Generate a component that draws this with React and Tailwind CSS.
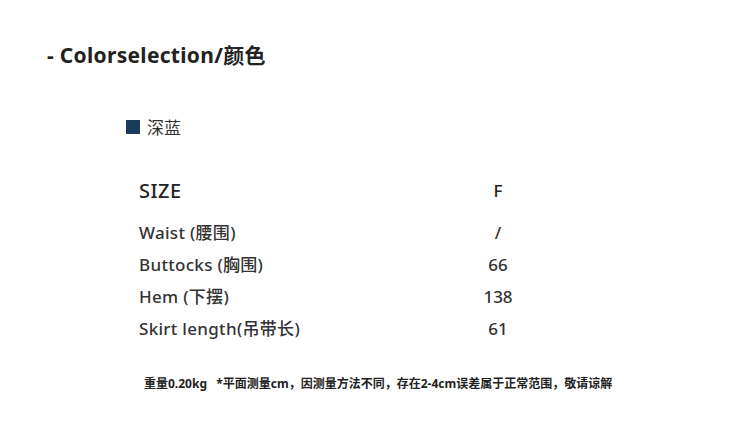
import React from 'react';

const rows = [
  { label: 'Waist (腰围)', value: '/' },
  { label: 'Buttocks (胸围)', value: '66' },
  { label: 'Hem (下摆)', value: '138' },
  { label: 'Skirt length(吊带长)', value: '61' },
];

export default function App() {
  return (
    <div
      className="w-[750px] h-[422px] bg-white text-[#222] overflow-hidden flex flex-col"
      style={{ fontFamily: '"Noto Sans", "Noto Sans CJK SC", sans-serif' }}
    >
      {/* Title */}
      <div className="ml-[47px] mt-[40px] h-[30px] flex items-center text-[21px] font-bold tracking-[0.3px] leading-none">
        - Colorselection/颜色
      </div>

      {/* Colour swatch */}
      <div className="ml-[126px] mt-[47px] flex items-center gap-[7px] h-[20px]">
        <div className="w-[14px] h-[14px] bg-[#1b3c5d]" />
        <span className="text-[17px] leading-none text-[#333]">深蓝</span>
      </div>

      {/* Size table */}
      <div className="ml-[139px] mt-[39px] grid grid-cols-[329px_60px]">
        <div className="h-[30px] flex items-center text-[20px] font-medium tracking-[0.5px]">SIZE</div>
        <div className="h-[30px] flex items-center justify-center text-[17px] font-medium">F</div>
        <div className="col-span-2 h-[11px]" />
        {rows.map((r) => (
          <React.Fragment key={r.label}>
            <div className="h-[32px] flex items-center text-[17px] font-medium tracking-[0.3px] text-[#333]">{r.label}</div>
            <div className="h-[32px] flex items-center justify-center text-[17px] font-medium text-[#333]">{r.value}</div>
          </React.Fragment>
        ))}
      </div>

      {/* Footnote */}
      <div className="ml-[144px] mt-[33px] text-[12px] font-bold leading-none text-[#222] whitespace-nowrap">
        重量0.20kg&nbsp;&nbsp;&nbsp;*平面测量cm，因测量方法不同，存在2-4cm误差属于正常范围，敬请谅解
      </div>
    </div>
  );
}
